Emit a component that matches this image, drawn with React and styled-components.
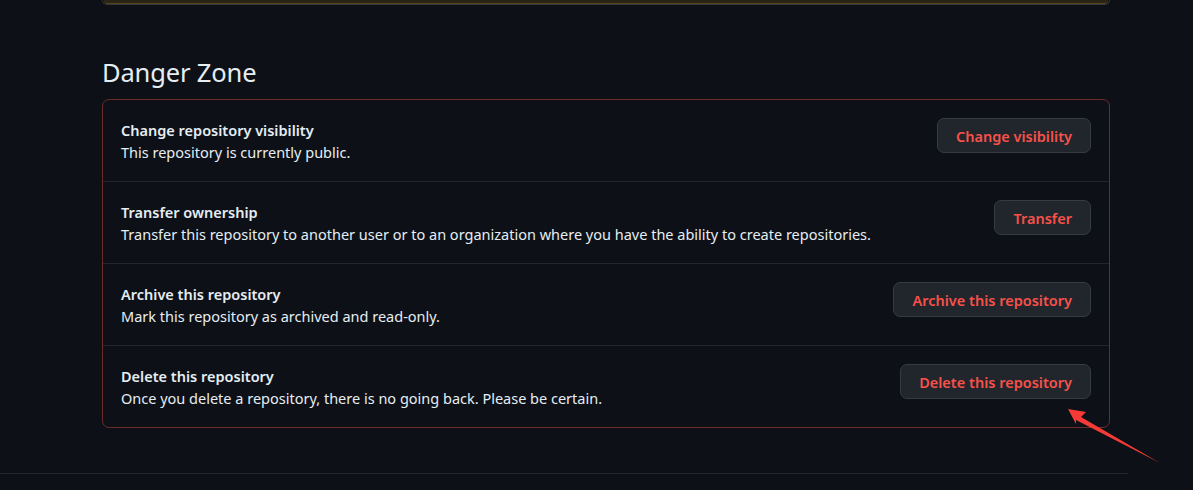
import React from "react";
import styled, { createGlobalStyle } from "styled-components";

const Global = createGlobalStyle`
  html, body { margin: 0; padding: 0; background: #0d1117; }
  body { font-family: "Noto Sans", "Open Sans", sans-serif; color: #e6edf3; }
`;

const Page = styled.div`
  width: 1193px;
  height: 490px;
  overflow: hidden;
  position: relative;
  background: #0d1117;
`;

const Column = styled.div`
  width: 1008px;
  margin-left: 102px;
`;

const TopBox = styled.div`
  height: 5px;
  box-sizing: border-box;
  border: 1px solid #30363d;
  border-top: none;
  border-radius: 0 0 7px 7px;
  overflow: hidden;
`;

const WarnStrip = styled.div`
  height: 3px;
  margin: 0 1px;
  background: #2a2416;
  border-bottom: 1px solid #574719;
  border-radius: 0 0 6px 6px;
`;

const Heading = styled.h2`
  margin: 48px 0 0;
  font-size: 25.5px;
  font-weight: 400;
  line-height: 38px;
  color: #e6edf3;
  letter-spacing: -0.15px;
`;

const DangerBox = styled.div`
  margin-top: 8px;
  border: 1px solid #6b2b2b;
  border-radius: 7px;
`;

const Row = styled.div`
  display: flex;
  align-items: flex-start;
  justify-content: space-between;
  box-sizing: border-box;
  padding: 18px 18px 0;
  border-top: ${(p) => (p.$first ? "none" : "1px solid #21262d")};
  height: ${(p) => (p.$first ? "81px" : "82px")};
`;

const Texts = styled.div`
  display: flex;
  flex-direction: column;
  margin-top: 1px;
`;

const Title = styled.div`
  font-size: 14.5px;
  font-weight: 600;
  line-height: 22px;
  color: #e6edf3;
`;

const Desc = styled.div`
  font-size: 14.5px;
  line-height: 22px;
  color: #e6edf3;
`;

const Button = styled.button`
  height: 35px;
  padding: 0 18px;
  box-sizing: border-box;
  background: #21262d;
  border: 1px solid #363b42;
  border-radius: 7px;
  color: #f85149;
  font-family: inherit;
  font-size: 14.5px;
  font-weight: 600;
  cursor: pointer;
`;

const Footer = styled.div`
  margin-top: 45px;
  width: 1128px;
  height: 1px;
  background: #21262d;
`;

const Arrow = styled.svg`
  position: absolute;
  left: 1060px;
  top: 400px;
`;

const rows = [
  {
    title: "Change repository visibility",
    desc: "This repository is currently public.",
    btn: "Change visibility",
  },
  {
    title: "Transfer ownership",
    desc: "Transfer this repository to another user or to an organization where you have the ability to create repositories.",
    btn: "Transfer",
  },
  {
    title: "Archive this repository",
    desc: "Mark this repository as archived and read-only.",
    btn: "Archive this repository",
  },
  {
    title: "Delete this repository",
    desc: "Once you delete a repository, there is no going back. Please be certain.",
    btn: "Delete this repository",
  },
];

export default function App() {
  return (
    <Page>
      <Global />
      <Column>
        <TopBox>
          <WarnStrip />
        </TopBox>
        <Heading>Danger Zone</Heading>
        <DangerBox>
          {rows.map((r, i) => (
            <Row key={r.title} $first={i === 0}>
              <Texts>
                <Title>{r.title}</Title>
                <Desc>{r.desc}</Desc>
              </Texts>
              <Button>{r.btn}</Button>
            </Row>
          ))}
        </DangerBox>
      </Column>
      <Footer />
      <Arrow width="110" height="70" viewBox="0 0 110 70">
        <polygon
          points="8,9 26,12 21,17 100,63 16,20 16,24"
          fill="#f63b36"
        />
      </Arrow>
    </Page>
  );
}
